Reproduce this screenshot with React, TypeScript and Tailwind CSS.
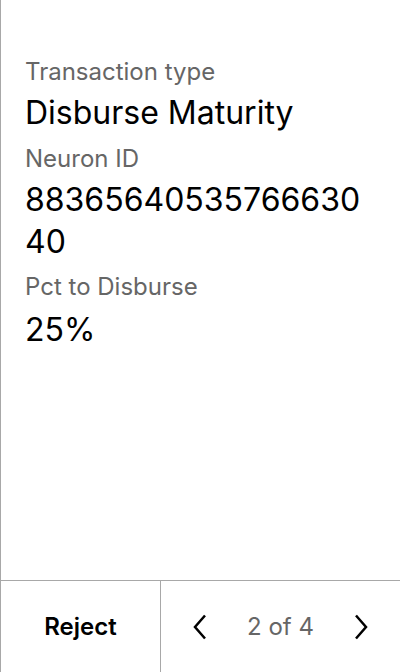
export default function App() {
  return (
    <div
      className="flex h-[672px] w-[400px] flex-col border-l border-[#a8a8a8] bg-white text-black"
      style={{ fontFamily: "Inter, 'Noto Sans', sans-serif" }}
    >
      <div className="flex flex-1 flex-col pl-6 pr-6 pt-[58px]">
        <div className="text-[24px] leading-[28px] text-[#666]">Transaction type</div>
        <div className="mt-[6px] text-[32px] leading-[42px]">Disburse Maturity</div>
        <div className="mt-[11px] text-[24px] leading-[28px] text-[#666]">Neuron ID</div>
        <div className="mt-[6px] break-all text-[32px] leading-[42px]">8836564053576663040</div>
        <div className="mt-[10px] text-[24px] leading-[28px] text-[#666]">Pct to Disburse</div>
        <div className="mt-[8px] text-[32px] leading-[42px]">25%</div>
      </div>
      <div className="flex h-[92px] border-t border-[#a8a8a8]">
        <button className="flex w-[160px] items-center justify-center border-r border-[#a8a8a8] text-[24px] font-semibold">
          Reject
        </button>
        <div className="flex flex-1 items-center justify-between px-[32px]">
          <svg width="14" height="26" viewBox="0 0 14 26" fill="none">
            <path d="M12 1.5 L2 13 L12 24.5" stroke="black" strokeWidth="2.5" />
          </svg>
          <span className="text-[24px] text-[#666]">2 of 4</span>
          <svg width="14" height="26" viewBox="0 0 14 26" fill="none">
            <path d="M2 1.5 L12 13 L2 24.5" stroke="black" strokeWidth="2.5" />
          </svg>
        </div>
      </div>
    </div>
  );
}
